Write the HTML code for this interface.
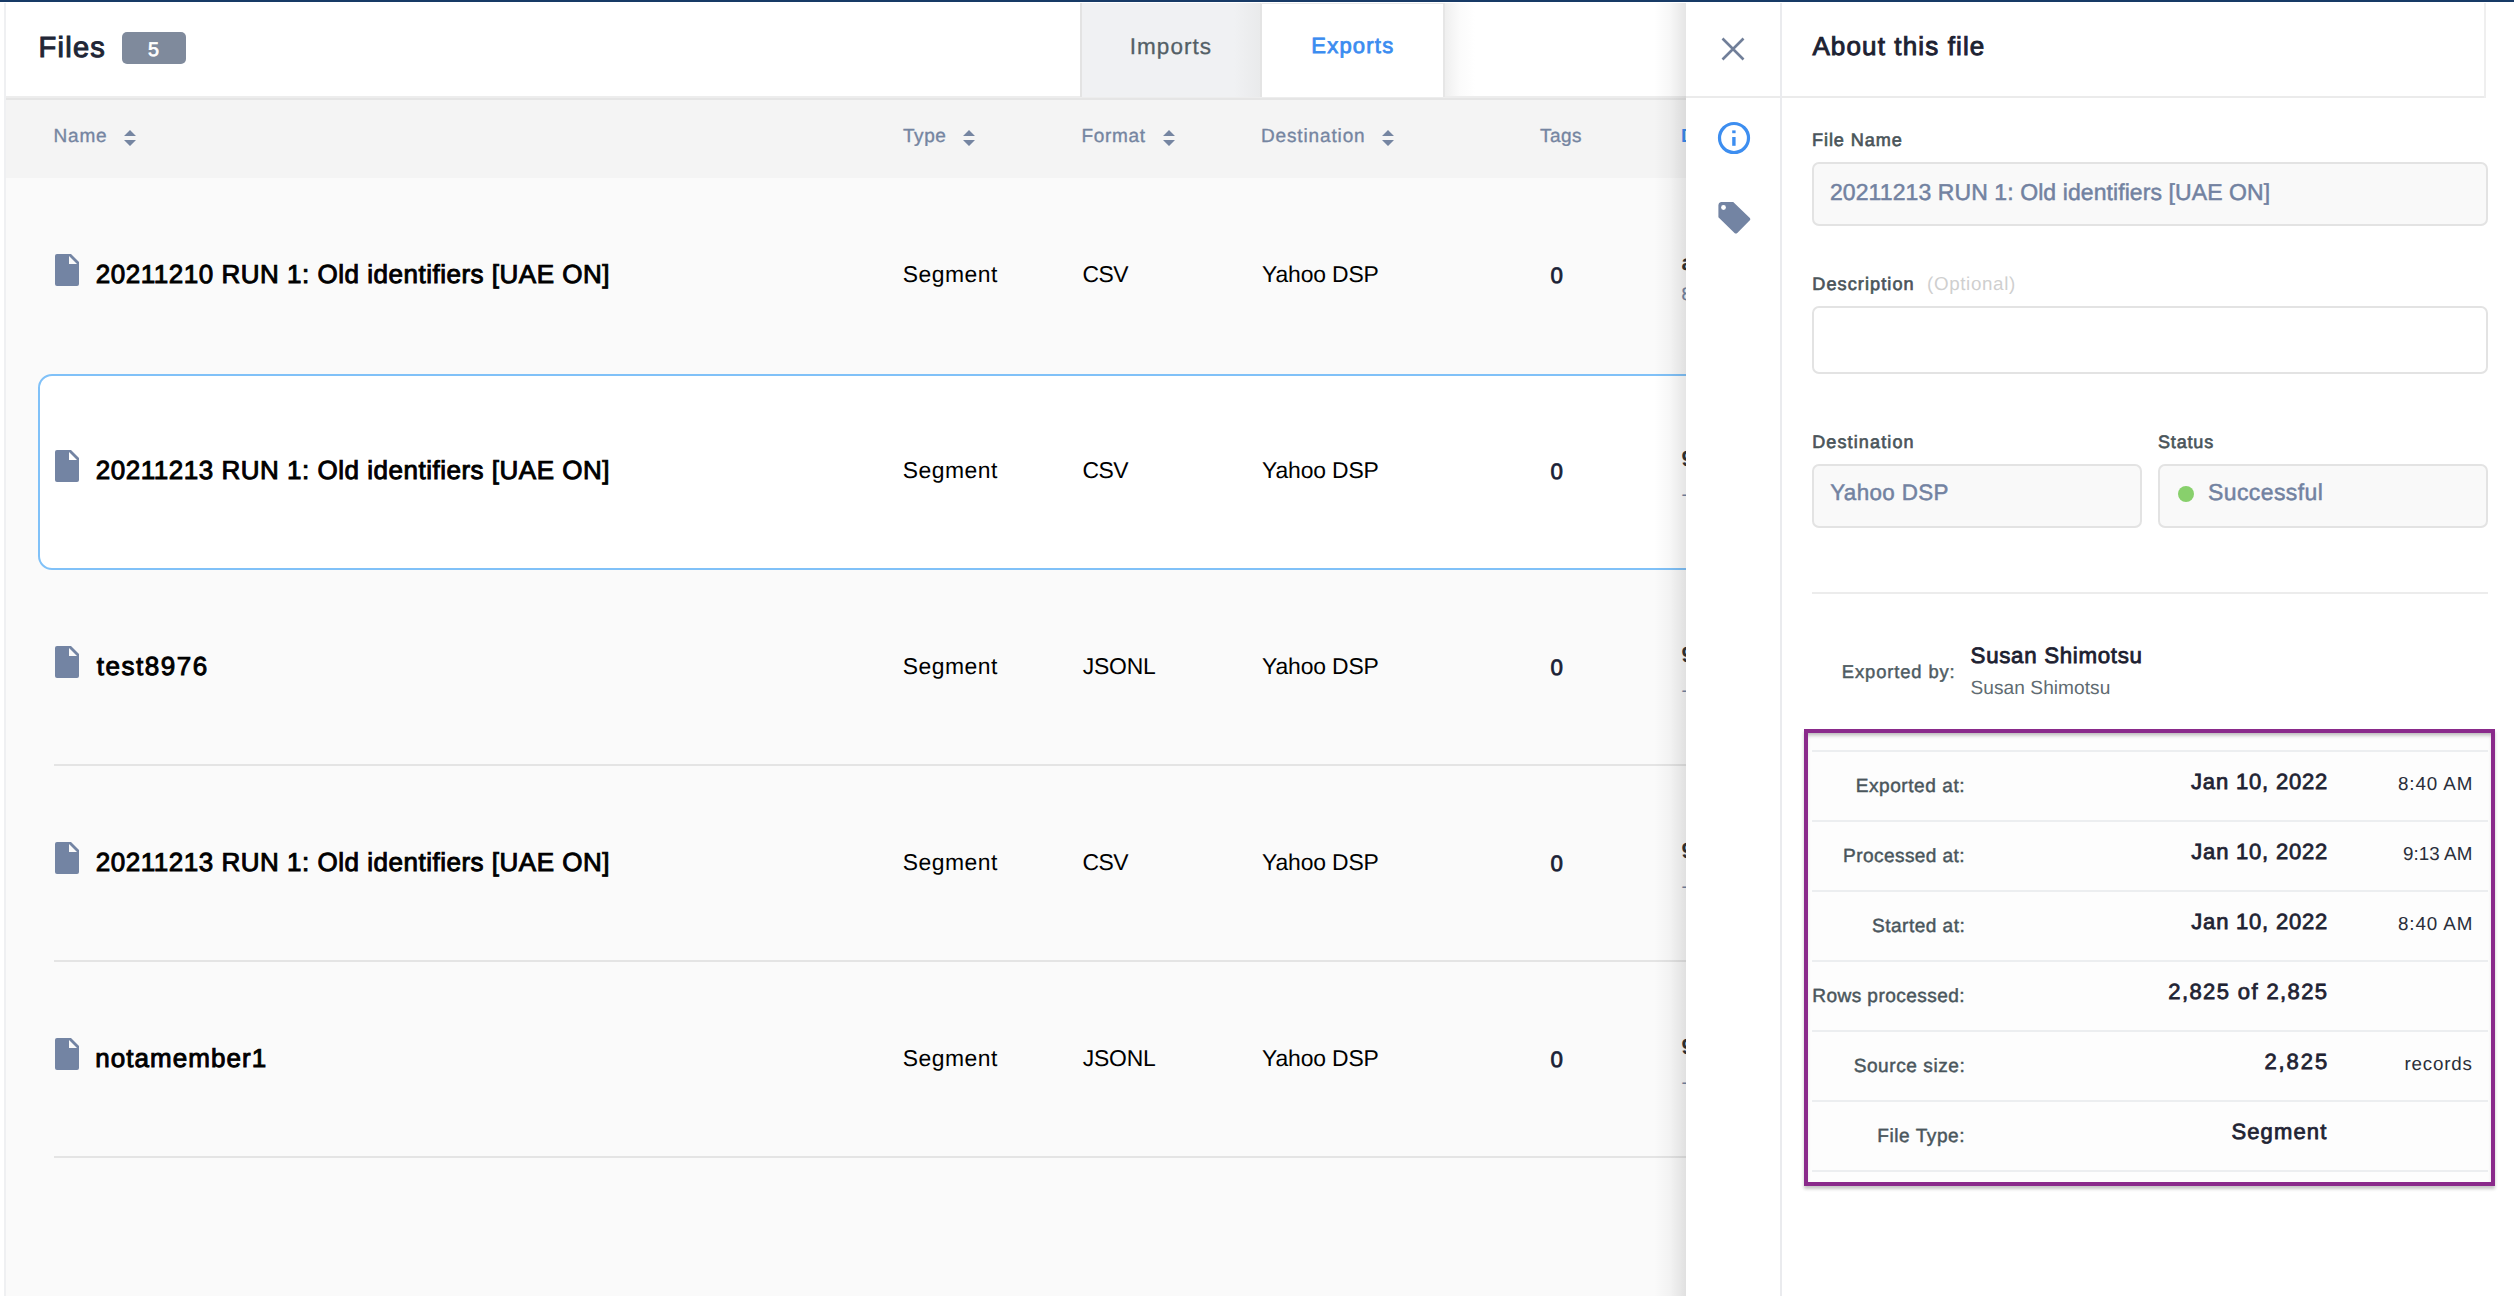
<!DOCTYPE html>
<html><head><meta charset="utf-8">
<style>
*{box-sizing:border-box;margin:0;padding:0}
html,body{width:2514px;height:1296px;overflow:hidden;background:#fafafa;font-family:"Liberation Sans",sans-serif;text-rendering:geometricPrecision}
.a{position:absolute}
.t{position:absolute;white-space:nowrap;line-height:1}
svg{position:absolute;display:block}
</style></head>
<body>
<div class="a" style="left:0px;top:0px;width:2514px;height:2px;background:#173a66;"></div>
<div class="a" style="left:0px;top:2px;width:2514px;height:1px;background:#fff;"></div>
<div class="a" style="left:0px;top:2px;width:4px;height:1294px;background:#fff;"></div>
<div class="a" style="left:4px;top:3px;width:2px;height:1293px;background:#eff0f2;"></div>
<div class="a" style="left:6px;top:3px;width:1680px;height:93px;background:#fff;"></div>
<div class="a" style="left:6px;top:96px;width:1680px;height:2px;background:#ededed;"></div>
<div class="a" style="left:6px;top:98px;width:1680px;height:2px;background:#e5e5e5;"></div>
<div class="a" style="left:6px;top:100px;width:1680px;height:78px;background:#f4f4f4;"></div>
<div class="t" style="left:38.43px;top:34px;font-size:29.0px;color:#212636;letter-spacing:1.287px;-webkit-text-stroke:1.03px #212636;">Files</div>
<div class="a" style="left:122px;top:32px;width:64px;height:32px;background:#7f8a9c;border-radius:5px"></div>
<div class="t" style="left:147.91px;top:41px;font-size:19.8px;color:#ffffff;-webkit-text-stroke:0.69px #ffffff;">5</div>
<div class="a" style="left:1080px;top:3px;width:2px;height:94px;background:#e3e3e3;"></div>
<div class="a" style="left:1082px;top:3px;width:179px;height:94px;background:linear-gradient(to right,#f0f1f3 0%,#f0f1f3 85%,#e9eaeb 100%);"></div>
<div class="a" style="left:1261px;top:3px;width:182px;height:94px;background:#fff;"></div>
<div class="a" style="left:1260px;top:3px;width:2px;height:94px;background:#e4e4e4;"></div>
<div class="a" style="left:1443px;top:3px;width:2px;height:94px;background:#e6e6e6;"></div>
<div class="a" style="left:1445px;top:3px;width:30px;height:93px;background:linear-gradient(to right,#efefef,#fbfbfb 50%,#fff);"></div>
<div class="a" style="left:1261px;top:3px;width:182px;height:1px;background:#e9e9e9;"></div>
<div class="t" style="left:1129.79px;top:36px;font-size:22.5px;color:#535f66;letter-spacing:1.03px;-webkit-text-stroke:0.3px #535f66;">Imports</div>
<div class="t" style="left:1311.27px;top:35px;font-size:22.0px;color:#3b8cf0;letter-spacing:1.226px;-webkit-text-stroke:0.79px #3b8cf0;">Exports</div>
<div class="t" style="left:53.61px;top:127px;font-size:19.0px;color:#7585a1;letter-spacing:0.786px;-webkit-text-stroke:0.35px #7585a1;">Name</div>
<div class="t" style="left:903.05px;top:127px;font-size:19.0px;color:#7585a1;letter-spacing:0.516px;-webkit-text-stroke:0.35px #7585a1;">Type</div>
<div class="t" style="left:1081.54px;top:127px;font-size:19.0px;color:#7585a1;letter-spacing:0.653px;-webkit-text-stroke:0.35px #7585a1;">Format</div>
<div class="t" style="left:1260.99px;top:127px;font-size:19.0px;color:#7585a1;letter-spacing:0.858px;-webkit-text-stroke:0.35px #7585a1;">Destination</div>
<div class="t" style="left:1540.1px;top:127px;font-size:19.0px;color:#7585a1;letter-spacing:0.436px;-webkit-text-stroke:0.35px #7585a1;">Tags</div>
<div class="t" style="left:1681px;top:127px;font-size:19px;font-weight:700;color:#3b8cf0">D</div>
<svg style="left:124px;top:130px" width="12" height="16" viewBox="0 0 12 16"><path d="M0 6L6 0L12 6Z M0 10L12 10L6 16Z" fill="#7585a1"/></svg>
<svg style="left:963px;top:130px" width="12" height="16" viewBox="0 0 12 16"><path d="M0 6L6 0L12 6Z M0 10L12 10L6 16Z" fill="#7585a1"/></svg>
<svg style="left:1163px;top:130px" width="12" height="16" viewBox="0 0 12 16"><path d="M0 6L6 0L12 6Z M0 10L12 10L6 16Z" fill="#7585a1"/></svg>
<svg style="left:1382px;top:130px" width="12" height="16" viewBox="0 0 12 16"><path d="M0 6L6 0L12 6Z M0 10L12 10L6 16Z" fill="#7585a1"/></svg>
<div class="a" style="left:38px;top:374px;width:1700px;height:196px;background:#fff;border:2px solid #80c1f8;border-radius:14px"></div>
<div class="a" style="left:54px;top:764px;width:1640px;height:2px;background:#e4e4e4;"></div>
<div class="a" style="left:54px;top:960px;width:1640px;height:2px;background:#e4e4e4;"></div>
<div class="a" style="left:54px;top:1156px;width:1640px;height:2px;background:#e4e4e4;"></div>
<svg style="left:55px;top:254px" width="24" height="32" viewBox="0 0 24 32"><path d="M2 0H16L24 8V30A2 2 0 0 1 22 32H2A2 2 0 0 1 0 30V2A2 2 0 0 1 2 0Z" fill="#7384a3"/><path d="M14 2V10H22Z" fill="#fafafa"/></svg>
<div class="t" style="left:95.87px;top:261px;font-size:26.0px;color:#000000;letter-spacing:0.511px;-webkit-text-stroke:0.94px #000000;">20211210 RUN 1: Old identifiers [UAE ON]</div>
<div class="t" style="left:902.78px;top:263px;font-size:22.9px;color:#000000;letter-spacing:0.501px;">Segment</div>
<div class="t" style="left:1082.57px;top:263px;font-size:22.9px;color:#000000;letter-spacing:-0.609px;">CSV</div>
<div class="t" style="left:1262.04px;top:263px;font-size:22.9px;color:#000000;letter-spacing:-0.145px;">Yahoo DSP</div>
<div class="t" style="left:1550.39px;top:265px;font-size:22.3px;color:#1a1f36;-webkit-text-stroke:0.79px #1a1f36;">0</div>
<div class="t" style="left:1681.5px;top:252px;font-size:22px;font-weight:700;color:#333">a</div>
<div class="t" style="left:1681.5px;top:285px;font-size:18px;color:#7585a1;-webkit-text-stroke:0.3px #7585a1">8</div>
<svg style="left:55px;top:450px" width="24" height="32" viewBox="0 0 24 32"><path d="M2 0H16L24 8V30A2 2 0 0 1 22 32H2A2 2 0 0 1 0 30V2A2 2 0 0 1 2 0Z" fill="#7384a3"/><path d="M14 2V10H22Z" fill="#fff"/></svg>
<div class="t" style="left:95.87px;top:457px;font-size:26.0px;color:#000000;letter-spacing:0.511px;-webkit-text-stroke:0.94px #000000;">20211213 RUN 1: Old identifiers [UAE ON]</div>
<div class="t" style="left:902.78px;top:459px;font-size:22.9px;color:#000000;letter-spacing:0.501px;">Segment</div>
<div class="t" style="left:1082.57px;top:459px;font-size:22.9px;color:#000000;letter-spacing:-0.609px;">CSV</div>
<div class="t" style="left:1262.04px;top:459px;font-size:22.9px;color:#000000;letter-spacing:-0.145px;">Yahoo DSP</div>
<div class="t" style="left:1550.39px;top:461px;font-size:22.3px;color:#1a1f36;-webkit-text-stroke:0.79px #1a1f36;">0</div>
<div class="t" style="left:1681.5px;top:448px;font-size:22px;font-weight:700;color:#333">9</div>
<div class="t" style="left:1681.5px;top:485px;font-size:18px;color:#7585a1">-</div>
<svg style="left:55px;top:646px" width="24" height="32" viewBox="0 0 24 32"><path d="M2 0H16L24 8V30A2 2 0 0 1 22 32H2A2 2 0 0 1 0 30V2A2 2 0 0 1 2 0Z" fill="#7384a3"/><path d="M14 2V10H22Z" fill="#fafafa"/></svg>
<div class="t" style="left:96.79px;top:653px;font-size:26.0px;color:#000000;letter-spacing:1.537px;-webkit-text-stroke:0.94px #000000;">test8976</div>
<div class="t" style="left:902.78px;top:655px;font-size:22.9px;color:#000000;letter-spacing:0.501px;">Segment</div>
<div class="t" style="left:1082.75px;top:655px;font-size:22.9px;color:#000000;letter-spacing:-0.195px;">JSONL</div>
<div class="t" style="left:1262.04px;top:655px;font-size:22.9px;color:#000000;letter-spacing:-0.145px;">Yahoo DSP</div>
<div class="t" style="left:1550.39px;top:657px;font-size:22.3px;color:#1a1f36;-webkit-text-stroke:0.79px #1a1f36;">0</div>
<div class="t" style="left:1681.5px;top:644px;font-size:22px;font-weight:700;color:#333">9</div>
<div class="t" style="left:1681.5px;top:681px;font-size:18px;color:#7585a1">-</div>
<svg style="left:55px;top:842px" width="24" height="32" viewBox="0 0 24 32"><path d="M2 0H16L24 8V30A2 2 0 0 1 22 32H2A2 2 0 0 1 0 30V2A2 2 0 0 1 2 0Z" fill="#7384a3"/><path d="M14 2V10H22Z" fill="#fafafa"/></svg>
<div class="t" style="left:95.87px;top:849px;font-size:26.0px;color:#000000;letter-spacing:0.511px;-webkit-text-stroke:0.94px #000000;">20211213 RUN 1: Old identifiers [UAE ON]</div>
<div class="t" style="left:902.78px;top:851px;font-size:22.9px;color:#000000;letter-spacing:0.501px;">Segment</div>
<div class="t" style="left:1082.57px;top:851px;font-size:22.9px;color:#000000;letter-spacing:-0.609px;">CSV</div>
<div class="t" style="left:1262.04px;top:851px;font-size:22.9px;color:#000000;letter-spacing:-0.145px;">Yahoo DSP</div>
<div class="t" style="left:1550.39px;top:853px;font-size:22.3px;color:#1a1f36;-webkit-text-stroke:0.79px #1a1f36;">0</div>
<div class="t" style="left:1681.5px;top:840px;font-size:22px;font-weight:700;color:#333">9</div>
<div class="t" style="left:1681.5px;top:877px;font-size:18px;color:#7585a1">-</div>
<svg style="left:55px;top:1038px" width="24" height="32" viewBox="0 0 24 32"><path d="M2 0H16L24 8V30A2 2 0 0 1 22 32H2A2 2 0 0 1 0 30V2A2 2 0 0 1 2 0Z" fill="#7384a3"/><path d="M14 2V10H22Z" fill="#fafafa"/></svg>
<div class="t" style="left:95.34px;top:1045px;font-size:26.0px;color:#000000;letter-spacing:1.045px;-webkit-text-stroke:0.94px #000000;">notamember1</div>
<div class="t" style="left:902.78px;top:1047px;font-size:22.9px;color:#000000;letter-spacing:0.501px;">Segment</div>
<div class="t" style="left:1082.75px;top:1047px;font-size:22.9px;color:#000000;letter-spacing:-0.195px;">JSONL</div>
<div class="t" style="left:1262.04px;top:1047px;font-size:22.9px;color:#000000;letter-spacing:-0.145px;">Yahoo DSP</div>
<div class="t" style="left:1550.39px;top:1049px;font-size:22.3px;color:#1a1f36;-webkit-text-stroke:0.79px #1a1f36;">0</div>
<div class="t" style="left:1681.5px;top:1036px;font-size:22px;font-weight:700;color:#333">9</div>
<div class="t" style="left:1681.5px;top:1073px;font-size:18px;color:#7585a1">-</div>
<div class="a" style="left:1654px;top:3px;width:32px;height:1293px;background:linear-gradient(to right,rgba(0,0,0,0),rgba(0,0,0,0.03) 50%,rgba(0,0,0,0.1));"></div>
<div class="a" style="left:1686px;top:3px;width:828px;height:1293px;background:#fff;"></div>
<div class="a" style="left:1686px;top:96px;width:800px;height:2px;background:#ebebeb;"></div>
<div class="a" style="left:1780px;top:3px;width:2px;height:1293px;background:#eaebee;"></div>
<div class="a" style="left:2484px;top:3px;width:2px;height:95px;background:#efefef;"></div>
<svg style="left:1720px;top:36px" width="26" height="26" viewBox="0 0 26 26"><path d="M2.5 2.5L23.5 23.5M23.5 2.5L2.5 23.5" stroke="#717f99" stroke-width="2.6"/></svg>
<svg style="left:1717px;top:121px" width="34" height="34" viewBox="0 0 34 34"><circle cx="17" cy="17" r="14.5" fill="none" stroke="#3d8ef0" stroke-width="3.2"/><rect x="15.2" y="9.4" width="3.4" height="2.8" fill="#3d8ef0"/><rect x="15.2" y="16" width="3.4" height="8.8" fill="#3d8ef0"/></svg>
<svg style="left:1717.5px;top:202px" width="33" height="32" viewBox="0 0 33 32"><path d="M3 0H15.2L31.6 15.8A2 2 0 0 1 31.6 18.6L19.3 30.9A2 2 0 0 1 16.5 30.9L0.4 15.3V3A3 3 0 0 1 3 0Z" fill="#7384a3"/><circle cx="5.5" cy="5.5" r="2.4" fill="#fff"/></svg>
<div class="t" style="left:1812.4px;top:33px;font-size:26.0px;color:#1d2232;letter-spacing:1.13px;-webkit-text-stroke:0.92px #1d2232;">About this file</div>
<div class="t" style="left:1812.07px;top:131px;font-size:18.1px;color:#4a555a;letter-spacing:0.901px;-webkit-text-stroke:0.64px #4a555a;">File Name</div>
<div class="a" style="left:1812px;top:162px;width:676px;height:64px;background:#f9f9f9;border:2px solid #e3e3e3;border-radius:7px"></div>
<div class="t" style="left:1829.96px;top:181px;font-size:23.0px;color:#7282a1;letter-spacing:0.087px;-webkit-text-stroke:0.5px #7282a1;">20211213 RUN 1: Old identifiers [UAE ON]</div>
<div class="t" style="left:1812.24px;top:275px;font-size:18.1px;color:#4a555a;letter-spacing:1.087px;-webkit-text-stroke:0.64px #4a555a;">Description</div>
<div class="t" style="left:1927.0px;top:275px;font-size:18.8px;color:#cfcfcf;letter-spacing:0.642px;">(Optional)</div>
<div class="a" style="left:1812px;top:306px;width:676px;height:68px;background:#fff;border:2px solid #e3e3e3;border-radius:7px"></div>
<div class="t" style="left:1812.16px;top:433px;font-size:18.0px;color:#4a555a;letter-spacing:1.14px;-webkit-text-stroke:0.64px #4a555a;">Destination</div>
<div class="t" style="left:2157.97px;top:433px;font-size:18.0px;color:#4a555a;letter-spacing:0.846px;-webkit-text-stroke:0.64px #4a555a;">Status</div>
<div class="a" style="left:1812px;top:464px;width:330px;height:64px;background:#f9f9f9;border:2px solid #e3e3e3;border-radius:7px"></div>
<div class="a" style="left:2158px;top:464px;width:330px;height:64px;background:#f9f9f9;border:2px solid #e3e3e3;border-radius:7px"></div>
<div class="t" style="left:1830.2px;top:482px;font-size:22.4px;color:#7282a1;letter-spacing:0.36px;-webkit-text-stroke:0.5px #7282a1;">Yahoo DSP</div>
<div class="a" style="left:2178px;top:486px;width:16px;height:16px;background:#88d06c;border-radius:50%"></div>
<div class="t" style="left:2208.06px;top:481px;font-size:23.0px;color:#7282a1;letter-spacing:0.388px;-webkit-text-stroke:0.5px #7282a1;">Successful</div>
<div class="a" style="left:1812px;top:592px;width:676px;height:2px;background:#ececec;"></div>
<div class="t" style="left:1841.81px;top:663px;font-size:18.4px;color:#4f5c62;letter-spacing:0.88px;-webkit-text-stroke:0.45px #4f5c62;">Exported by:</div>
<div class="t" style="left:1970.57px;top:645px;font-size:22.3px;color:#1c2030;letter-spacing:0.693px;-webkit-text-stroke:0.79px #1c2030;">Susan Shimotsu</div>
<div class="t" style="left:1970.56px;top:679px;font-size:19.1px;color:#5f6b71;letter-spacing:0.057px;">Susan Shimotsu</div>
<div class="a" style="left:1804px;top:729px;width:691px;height:457px;background:#fdfdfd;border:4px solid #8a2a8b;box-shadow:0 3px 3px rgba(0,0,0,0.22), inset 0 4px 4px -2px rgba(0,0,0,0.3)"></div>
<div class="a" style="left:1812px;top:750px;width:676px;height:2px;background:#eceef0;"></div>
<div class="a" style="left:1812px;top:820px;width:676px;height:2px;background:#eceef0;"></div>
<div class="a" style="left:1812px;top:890px;width:676px;height:2px;background:#eceef0;"></div>
<div class="a" style="left:1812px;top:960px;width:676px;height:2px;background:#eceef0;"></div>
<div class="a" style="left:1812px;top:1030px;width:676px;height:2px;background:#eceef0;"></div>
<div class="a" style="left:1812px;top:1100px;width:676px;height:2px;background:#eceef0;"></div>
<div class="a" style="left:1812px;top:1170px;width:676px;height:2px;background:#eceef0;"></div>
<div class="t" style="left:1855.65px;top:777px;font-size:19.1px;color:#4a565c;letter-spacing:0.547px;-webkit-text-stroke:0.45px #4a565c;">Exported at:</div>
<div class="t" style="left:1843.11px;top:847px;font-size:19.1px;color:#4a565c;letter-spacing:0.394px;-webkit-text-stroke:0.45px #4a565c;">Processed at:</div>
<div class="t" style="left:1872.1px;top:917px;font-size:19.1px;color:#4a565c;letter-spacing:0.454px;-webkit-text-stroke:0.45px #4a565c;">Started at:</div>
<div class="t" style="left:1812.23px;top:987px;font-size:19.1px;color:#4a565c;letter-spacing:0.417px;-webkit-text-stroke:0.45px #4a565c;">Rows processed:</div>
<div class="t" style="left:1853.66px;top:1057px;font-size:19.1px;color:#4a565c;letter-spacing:0.547px;-webkit-text-stroke:0.45px #4a565c;">Source size:</div>
<div class="t" style="left:1877.22px;top:1127px;font-size:19.1px;color:#4a565c;letter-spacing:0.547px;-webkit-text-stroke:0.45px #4a565c;">File Type:</div>
<div class="t" style="left:2191.02px;top:771px;font-size:22.0px;color:#1f2333;letter-spacing:0.823px;-webkit-text-stroke:0.78px #1f2333;">Jan 10, 2022</div>
<div class="t" style="left:2191.34px;top:841px;font-size:22.0px;color:#1f2333;letter-spacing:0.787px;-webkit-text-stroke:0.78px #1f2333;">Jan 10, 2022</div>
<div class="t" style="left:2191.34px;top:911px;font-size:22.0px;color:#1f2333;letter-spacing:0.787px;-webkit-text-stroke:0.78px #1f2333;">Jan 10, 2022</div>
<div class="t" style="left:2168.35px;top:981px;font-size:22.0px;color:#1f2333;letter-spacing:1.389px;-webkit-text-stroke:0.78px #1f2333;">2,825 of 2,825</div>
<div class="t" style="left:2264.45px;top:1051px;font-size:22.0px;color:#1f2333;letter-spacing:1.91px;-webkit-text-stroke:0.78px #1f2333;">2,825</div>
<div class="t" style="left:2231.4px;top:1121px;font-size:22.0px;color:#1f2333;letter-spacing:1.145px;-webkit-text-stroke:0.78px #1f2333;">Segment</div>
<div class="t" style="left:2398.0px;top:775px;font-size:18.8px;color:#2a2e3a;letter-spacing:0.907px;">8:40 AM</div>
<div class="t" style="left:2402.98px;top:845px;font-size:18.8px;color:#2a2e3a;letter-spacing:0.08px;">9:13 AM</div>
<div class="t" style="left:2398.0px;top:915px;font-size:18.8px;color:#2a2e3a;letter-spacing:0.907px;">8:40 AM</div>
<div class="t" style="left:2404.58px;top:1055px;font-size:18.8px;color:#2a2e3a;letter-spacing:0.764px;">records</div>
</body></html>
